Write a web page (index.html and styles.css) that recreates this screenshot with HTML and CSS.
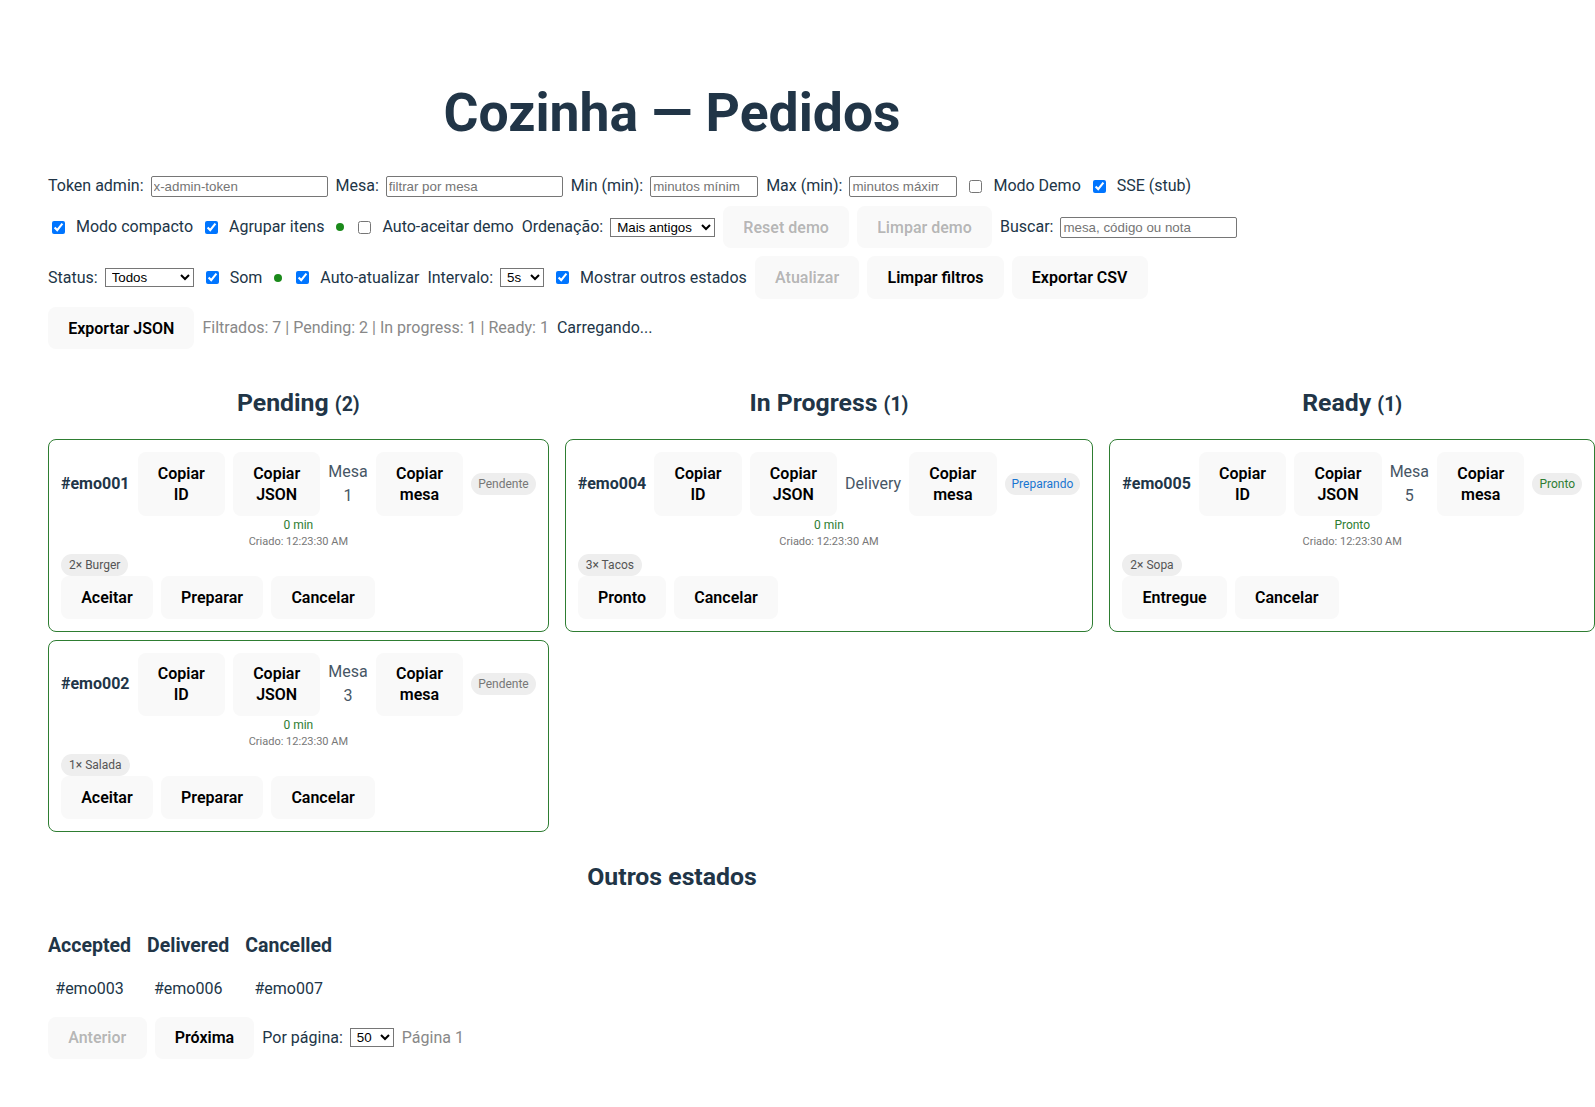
FILE: index.html
```html
<!DOCTYPE html>
<html lang="pt-BR">
<head>
<meta charset="utf-8">
<title>Cozinha — Pedidos</title>
<link rel="stylesheet" href="styles.css">
</head>
<body>
<div class="root">
  <h1 class="title">Cozinha — Pedidos</h1>

  <div class="toolbar">
    <div class="row">
      <label class="field">Token admin: <input class="input w-wide" type="text" placeholder="x-admin-token"></label>
      <label class="field">Mesa: <input class="input w-wide" type="text" placeholder="filtrar por mesa"></label>
      <label class="field">Min (min): <input class="input w-num" type="number" placeholder="minutos mínimos"></label>
      <label class="field">Max (min): <input class="input w-num" type="number" placeholder="minutos máximos"></label>
      <label class="check"><input type="checkbox"> Modo Demo</label>
      <label class="check"><input type="checkbox" checked> SSE (stub)</label>
    </div>
    <div class="row">
      <label class="check"><input type="checkbox" checked> Modo compacto</label>
      <label class="check"><input type="checkbox" checked> Agrupar itens</label>
      <span class="dot"></span>
      <label class="check"><input type="checkbox"> Auto-aceitar demo</label>
      <label class="field">Ordenação:
        <select class="select w-sort"><option>Mais antigos</option><option>Mais recentes</option></select>
      </label>
      <button class="btn" disabled>Reset demo</button>
      <button class="btn" disabled>Limpar demo</button>
      <label class="field">Buscar: <input class="input w-wide" type="text" placeholder="mesa, código ou nota"></label>
    </div>
    <div class="row">
      <label class="field">Status:
        <select class="select w-status"><option>Todos</option><option>Pending</option><option>In progress</option><option>Ready</option></select>
      </label>
      <label class="check"><input type="checkbox" checked> Som</label>
      <span class="dot"></span>
      <label class="check"><input type="checkbox" checked> Auto-atualizar</label>
      <label class="field">Intervalo:
        <select class="select w-small"><option>5s</option><option>10s</option><option>30s</option></select>
      </label>
      <label class="check"><input type="checkbox" checked> Mostrar outros estados</label>
      <button class="btn" disabled>Atualizar</button>
      <button class="btn">Limpar filtros</button>
      <button class="btn">Exportar CSV</button>
    </div>
    <div class="row">
      <button class="btn">Exportar JSON</button>
      <span class="muted">Filtrados: 7 | Pending: 2 | In progress: 1 | Ready: 1</span>
      <span>Carregando...</span>
    </div>
  </div>

  <div class="board">
    <section class="col">
      <h2 class="col-title">Pending <span class="count">(2)</span></h2>
      <div class="cards">
        <article class="card">
          <div class="card-head">
            <strong class="oid">#emo001</strong>
            <button class="btn stack">Copiar ID</button>
            <button class="btn stack">Copiar JSON</button>
            <span class="where">Mesa 1</span>
            <button class="btn stack">Copiar mesa</button>
            <span class="badge b-pending">Pendente</span>
          </div>
          <div class="age">0 min</div>
          <div class="created">Criado: 12:23:30 AM</div>
          <div class="items"><span class="chip">2× Burger</span></div>
          <div class="actions">
            <button class="btn">Aceitar</button>
            <button class="btn">Preparar</button>
            <button class="btn">Cancelar</button>
          </div>
        </article>
        <article class="card">
          <div class="card-head">
            <strong class="oid">#emo002</strong>
            <button class="btn stack">Copiar ID</button>
            <button class="btn stack">Copiar JSON</button>
            <span class="where">Mesa 3</span>
            <button class="btn stack">Copiar mesa</button>
            <span class="badge b-pending">Pendente</span>
          </div>
          <div class="age">0 min</div>
          <div class="created">Criado: 12:23:30 AM</div>
          <div class="items"><span class="chip">1× Salada</span></div>
          <div class="actions">
            <button class="btn">Aceitar</button>
            <button class="btn">Preparar</button>
            <button class="btn">Cancelar</button>
          </div>
        </article>
      </div>
    </section>

    <section class="col">
      <h2 class="col-title">In Progress <span class="count">(1)</span></h2>
      <div class="cards">
        <article class="card">
          <div class="card-head">
            <strong class="oid">#emo004</strong>
            <button class="btn stack">Copiar ID</button>
            <button class="btn stack">Copiar JSON</button>
            <span class="where">Delivery</span>
            <button class="btn stack">Copiar mesa</button>
            <span class="badge b-progress">Preparando</span>
          </div>
          <div class="age">0 min</div>
          <div class="created">Criado: 12:23:30 AM</div>
          <div class="items"><span class="chip">3× Tacos</span></div>
          <div class="actions">
            <button class="btn">Pronto</button>
            <button class="btn">Cancelar</button>
          </div>
        </article>
      </div>
    </section>

    <section class="col">
      <h2 class="col-title">Ready <span class="count">(1)</span></h2>
      <div class="cards">
        <article class="card">
          <div class="card-head">
            <strong class="oid">#emo005</strong>
            <button class="btn stack">Copiar ID</button>
            <button class="btn stack">Copiar JSON</button>
            <span class="where">Mesa 5</span>
            <button class="btn stack">Copiar mesa</button>
            <span class="badge b-ready">Pronto</span>
          </div>
          <div class="age">Pronto</div>
          <div class="created">Criado: 12:23:30 AM</div>
          <div class="items"><span class="chip">2× Sopa</span></div>
          <div class="actions">
            <button class="btn">Entregue</button>
            <button class="btn">Cancelar</button>
          </div>
        </article>
      </div>
    </section>
  </div>

  <h2 class="others-title">Outros estados</h2>
  <div class="others">
    <div class="other-col">
      <h3 class="other-head">Accepted</h3>
      <div class="other-item">#emo003</div>
    </div>
    <div class="other-col">
      <h3 class="other-head">Delivered</h3>
      <div class="other-item">#emo006</div>
    </div>
    <div class="other-col">
      <h3 class="other-head">Cancelled</h3>
      <div class="other-item">#emo007</div>
    </div>
  </div>

  <div class="pager">
    <button class="btn" disabled>Anterior</button>
    <button class="btn">Próxima</button>
    <label class="field">Por página:
      <select class="select w-small"><option>50</option><option>100</option></select>
    </label>
    <span class="muted">Página 1</span>
  </div>
</div>
</body>
</html>
```

FILE: styles.css
```css
* {
  box-sizing: border-box;
}

html,
body {
  margin: 0;
  background: #ffffff;
}

body {
  font-family: Roboto, "Segoe UI", "Noto Sans", sans-serif;
  font-size: 16px;
  line-height: 1.5;
  font-weight: 400;
  color: #213547;
  overflow-x: hidden;
}

.root {
  width: 1344px;
  padding: 48px;
  text-align: center;
}

.title {
  font-size: 53.5px;
  line-height: 56px;
  font-weight: 700;
  margin: 37px 0 33px;
}

/* toolbar */
.toolbar {
  display: flex;
  flex-direction: column;
  gap: 8px;
  text-align: left;
}

.row {
  display: flex;
  flex-wrap: wrap;
  align-items: center;
  gap: 8px;
}

.field {
  display: inline-flex;
  align-items: center;
  gap: 7px;
  white-space: nowrap;
}

.check {
  display: inline-flex;
  align-items: center;
  gap: 8px;
  white-space: nowrap;
}

.check input {
  margin: 3px 3px 3px 4px;
  width: 13px;
  height: 13px;
}

.input {
  font: 13.333px "Liberation Sans", Arial, sans-serif;
  height: 21px;
  padding: 1px 2px;
  border: 1px solid #767676;
  border-radius: 2px;
  color: #000;
  background: #fff;
}

.input::placeholder {
  color: #757575;
}

.w-wide {
  width: 177px;
}

.w-num {
  width: 108px;
}

.select {
  font: 13.333px "Liberation Sans", Arial, sans-serif;
  height: 19px;
  border: 1px solid #767676;
  border-radius: 0;
  background: #fff;
  color: #000;
  padding: 0 0 0 2px;
}

.w-sort {
  width: 105px;
}

.w-status {
  width: 89px;
}

.w-small {
  width: 44px;
}

.dot {
  display: inline-block;
  width: 8px;
  height: 8px;
  border-radius: 50%;
  background: #1a8a1a;
  margin: 0 2px 0 4px;
}

.muted {
  color: #888888;
}

/* buttons */
.btn {
  font-family: inherit;
  font-size: 16px;
  font-weight: 600;
  line-height: 1.33;
  padding: 9.6px 19.2px;
  border: 1px solid transparent;
  border-radius: 8px;
  background: #f9f9f9;
  color: #000;
  cursor: pointer;
}

.btn:disabled {
  color: rgba(16, 16, 16, 0.3);
  cursor: default;
}

.btn.stack {
  width: min-content;
}

/* board */
.board {
  display: grid;
  grid-template-columns: repeat(3, 1fr);
  gap: 16px;
  margin-top: 36px;
  align-items: start;
}

.col-title {
  font-size: 24.8px;
  line-height: 36px;
  font-weight: 700;
  margin: 0 0 16px;
}

.count {
  font-size: 19.5px;
}

.cards {
  display: flex;
  flex-direction: column;
  gap: 8px;
}

.card {
  border: 1px solid #2e7d32;
  border-radius: 8px;
  padding: 12px;
  background: #fff;
}

.card-head {
  display: flex;
  align-items: center;
  gap: 8px;
}

.oid {
  font-weight: 700;
  white-space: nowrap;
}

.where {
  width: min-content;
  color: #475665;
}

.badge {
  font-size: 12px;
  line-height: 18px;
  padding: 2px 7px;
  border-radius: 999px;
  background: #eeeeee;
  white-space: nowrap;
}

.b-pending {
  color: #777777;
}

.b-progress {
  color: #1976d2;
}

.b-ready {
  color: #2e7d32;
}

.age {
  font-size: 12px;
  line-height: 18px;
  color: #2e7d32;
}

.created {
  font-size: 11px;
  line-height: 16px;
  color: #777777;
}

.items {
  display: flex;
  gap: 4px;
  margin-top: 4px;
}

.chip {
  font-size: 12px;
  line-height: 18px;
  padding: 2px 8px;
  border-radius: 999px;
  background: #eeeeee;
  color: #555555;
}

.actions {
  display: flex;
  gap: 8px;
}

/* others */
.others-title {
  font-size: 24.8px;
  line-height: 36px;
  font-weight: 700;
  margin: 27px 0 20px;
}

.others {
  display: flex;
  gap: 16px;
}

.other-head {
  font-size: 19.5px;
  line-height: 28px;
  font-weight: 700;
  margin: 17px 0;
}

.other-item {
  line-height: 24px;
  color: #213547;
}

.pager {
  display: flex;
  align-items: center;
  gap: 8px;
  margin-top: 16px;
}
```
